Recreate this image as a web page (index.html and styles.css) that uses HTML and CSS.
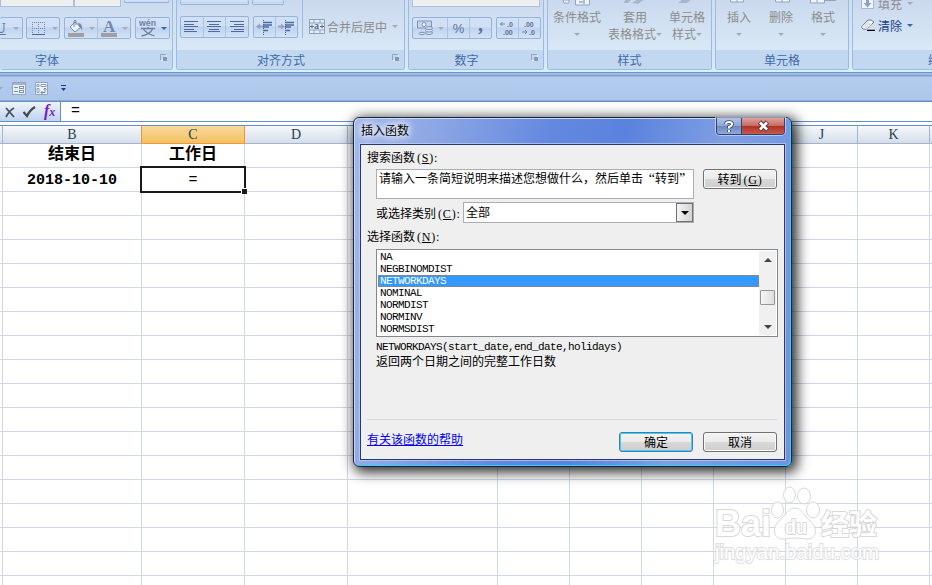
FILE: index.html
```
<!DOCTYPE html>
<html lang="zh-CN">
<head>
    <meta charset="utf-8">
    <title>插入函数</title>
    <link rel="stylesheet" href="styles.css">
</head>
<body>
    <div class="ribbon">
        <div class="group font-group">
            <div class="top-row">
                <span class="combo font-name"></span>
                <span class="combo font-size"></span>
                <span class="btns grow"></span>
            </div>
            <div class="btn-row">
                <div class="btns underline"><b>U</b><i class="arrow"></i></div>
                <div class="btns border-btn">
                    <svg width="15" height="15" shape-rendering="crispEdges"><path d="M1 1h13M1 7.5h13M1.5 1v12M7.5 1v12M13.5 1v12" stroke="#7088b5" stroke-dasharray="1 1" fill="none"/><path d="M1 13.5h13" stroke="#4a689e"/></svg>
                    <i class="arrow"></i>
                </div>
                <div class="btns color-btns">
                    <span>
                        <svg width="18" height="18"><path d="M3 8l5-5 6 5-6 5z" fill="#eef4fc" stroke="#7388ae"/><path d="M7 8V2q1-2 2 0v4" fill="none" stroke="#7388ae"/><path d="M11 4q5 0 4 8-1-4-3-4z" fill="#7388ae"/><path d="M1 14h16v4H1z" fill="#a0a0a4"/></svg>
                        <i class="arrow"></i>
                    </span>
                    <span>
                        <svg width="18" height="18"><text x="3" y="13" class="letter-a">A</text><path d="M1 14h16v4H1z" fill="#a0a0a4"/></svg>
                        <i class="arrow"></i>
                    </span>
                </div>
                <div class="btns phonetic">
                    <svg width="18" height="18"><text x="0" y="7" class="wen" textLength="17" lengthAdjust="spacingAndGlyphs">wén</text><path d="M2 9.500h14M9 8v2M4.500 10q2 4 11 7M13.500 10q-2 5-11 7" fill="none" stroke="#6e81a5" stroke-width="1.300"/></svg>
                    <i class="arrow on"></i>
                </div>
            </div>
            <div class="group-name">字体<i class="launcher"></i></div>
        </div>

        <div class="group align-group">
            <div class="top-row">
                <span class="btns valign"></span>
                <span class="btns orient"></span>
            </div>
            <div class="btn-row">
                <div class="btns halign">
                    <span><svg width="15" height="12" shape-rendering="crispEdges"><path d="M0 .5h14M0 3.500h10M0 5.500h14M0 8.500h10M0 10.500h13" stroke="#4d6a9a"/></svg></span>
                    <span><svg width="15" height="12" shape-rendering="crispEdges"><path d="M0 .5h14M2 3.500h10M0 5.500h14M2 8.500h10M1 10.500h12" stroke="#4d6a9a"/></svg></span>
                    <span><svg width="15" height="12" shape-rendering="crispEdges"><path d="M0 .5h14M4 3.500h10M0 5.500h14M4 8.500h10M1 10.500h13" stroke="#4d6a9a"/></svg></span>
                </div>
                <div class="btns indent">
                    <span><svg width="17" height="15"><path d="M0 6.500l4-3v2h3v2h-3v2z" fill="#91a5c7"/><path d="M7 2.500h9M7 5h9M7 7h6M7 10.500h5" stroke="#4d6a9a" stroke-width="1.500"/><path d="M7.500 0v15" stroke="#4d6a9a" stroke-dasharray="1 1"/></svg></span>
                    <span><svg width="17" height="15"><path d="M7 6.500l-4-3v2h-3v2h3v2z" fill="#91a5c7"/><path d="M7 2.500h9M7 5h9M7 7h6M7 10.500h5" stroke="#4d6a9a" stroke-width="1.500"/><path d="M7.500 0v15" stroke="#4d6a9a" stroke-dasharray="1 1"/></svg></span>
                </div>
                <div class="merge">
                    <svg width="16" height="15"><path d="M.5.5h15v14H.5zM.5 4h15M.5 11h15M5 .5V4M11 .5V4M5 11v3.500M11 11v3.500" fill="#e9f0fa" stroke="#8b9fc0"/><path d="M1 7.500h4M11 7.500h4M3 5.500v4M13 5.500v4" stroke="#526c99"/><text x="5" y="10" class="small-a">a</text></svg>
                    合并后居中<i class="arrow"></i>
                </div>
            </div>
            <div class="group-name">对齐方式<i class="launcher"></i></div>
        </div>

        <div class="group number-group">
            <div class="top-row"><span class="combo format"></span></div>
            <div class="btn-row">
                <div class="btns number-btns">
                    <span class="money">
                        <svg width="17" height="16"><path d="M.5 1h14v7H.5z" fill="#c8d6eb" stroke="#7c91b6"/><circle cx="7" cy="4.500" r="2" fill="#f3f7fd" stroke="#7c91b6"/><g fill="#d7e2f2" stroke="#7c91b6"><ellipse cx="12" cy="13" rx="3.500" ry="1.500"/><ellipse cx="12" cy="10.500" rx="3.500" ry="1.500"/><ellipse cx="12" cy="8" rx="3.500" ry="1.500"/><ellipse cx="5" cy="13.500" rx="3" ry="1.200"/></g></svg>
                        <i class="arrow"></i>
                    </span>
                    <span>%</span>
                    <span class="comma">,</span>
                </div>
                <div class="btns decimals">
                    <span><svg width="18" height="16"><path d="M1 4h5M3.500 2l-2 2 2 2" fill="none" stroke="#6f88b2"/><text x="8" y="7">.0</text><text x="4" y="15">.00</text></svg></span>
                    <span><svg width="18" height="16"><text x="3" y="7">.00</text><path d="M1 12h5M4 10l2 2-2 2" fill="none" stroke="#6f88b2"/><text x="8" y="15">.0</text></svg></span>
                </div>
            </div>
            <div class="group-name">数字<i class="launcher"></i></div>
        </div>

        <div class="group style-group">
            <div class="big-btns">
                <div class="big cond">
                    <svg width="34" height="6"><path d="M3 0h6v3H4zM15.500-1h14v6h-14z" fill="#eef4fb" stroke="#91a3bf"/><path d="M19 2h4M24 0v4" stroke="#7188ad"/></svg>
                    <p>条件格式</p><p><i class="arrow"></i></p>
                </div>
                <div class="big fmt">
                    <svg width="34" height="6"><path d="M7 0h6l-3 3H6zM14 3l6-4h7l-7 5z" fill="#a7b6ce"/></svg>
                    <p>套用</p><p>表格格式<i class="arrow"></i></p>
                </div>
                <div class="big cell-style">
                    <svg width="34" height="6"><path d="M8 3l5-4h9l-5 4z" fill="#a7b6ce"/></svg>
                    <p>单元格</p><p>样式<i class="arrow"></i></p>
                </div>
            </div>
            <div class="group-name">样式</div>
        </div>

        <div class="group cell-group">
            <div class="big-btns">
                <div class="big">
                    <svg width="34" height="6"><path d="M8.500-2h13v4h-13zM15-2v4" fill="#eef4fb" stroke="#91a3bf"/></svg>
                    <p>插入</p><p><i class="arrow"></i></p>
                </div>
                <div class="big">
                    <svg width="34" height="6"><path d="M11.500-2h14v4h-14zM18-2v4" fill="#eef4fb" stroke="#91a3bf"/></svg>
                    <p>删除</p><p><i class="arrow"></i></p>
                </div>
                <div class="big">
                    <svg width="34" height="6"><path d="M4.500-2h14v5h-14zM11-2v5" fill="#eef4fb" stroke="#91a3bf"/><path d="M18 0h12" stroke="#91a3bf" stroke-width="2"/></svg>
                    <p>格式</p><p><i class="arrow"></i></p>
                </div>
            </div>
            <div class="group-name">单元格</div>
        </div>

        <div class="group edit-group">
            <div class="edit-row fill">
                <svg width="14" height="14"><path d="M.5.5h12v12H.5z" fill="#eef4fc" stroke="#a6b7d0"/><path d="M5 2h3v5h2.500l-4 4.500L2.500 7H5z" fill="#8ca1c4"/></svg>
                填充<i class="arrow"></i>
            </div>
            <div class="edit-row clear">
                <svg width="14" height="12"><path d="M1 7l6-6q3-1 6 2L7 9q-2 2-5 1-2-1-1-3z" fill="#fff" stroke="#66758f"/><path d="M1 7l6-5 4 3-5 5z" fill="#dfe6f2"/><path d="M6 11.500h8" stroke="#000" stroke-width="1.500"/></svg>
                清除<i class="arrow on"></i>
            </div>
            <div class="group-name">编辑</div>
        </div>
    </div>

    <div class="quick-bar">
        <i class="arrow"></i>
        <svg class="form-icon" width="14" height="13" shape-rendering="crispEdges"><path d="M.5.500h13v12H.5z" fill="#e8eff9" stroke="#93a5c1"/><path d="M1 2h12" stroke="#a5b3c9" stroke-width="2"/><path d="M2 5.500h4M2 9.500h4" stroke="#7f92b0"/><path d="M7.500 4.500h4v2h-4zM7.500 8.500h4v2h-4z" fill="#fff" stroke="#7f92b0"/></svg>
        <svg width="14" height="13"><path d="M.5.500h12v12H.5z" fill="#eef3fa" stroke="#93a5c1"/><path d="M2 2.500h2v2H2zM6 2.500h5v2H6zM2 6.500h2v4H2z" fill="#fff" stroke="#8d9dba"/><path d="M6 10.500h4V6M7.500 9L6 10.500 7.500 12M8.500 7.500L10 6l1.500 1.500" fill="none" stroke="#7488a8"/></svg>
        <svg class="more" width="6" height="7"><path d="M0 .5h5" stroke="#173f85"/><path d="M0 3h5L2.500 6z" fill="#173f85"/></svg>
    </div>

    <div class="formula-bar">
        <div class="fx-box">
            <svg width="10" height="12"><path d="M1 2l8 9M9 2q-5 3-8 9" stroke="#4c4f55" stroke-width="1.800" fill="none"/></svg>
            <svg class="tick" width="14" height="12"><path d="M1.500 6l3.500 4q3-6 8-9" stroke="#45474d" stroke-width="2.200" fill="none"/></svg>
            <span class="fx">f<small>x</small></span>
        </div>
        <div class="formula">=</div>
    </div>

    <table class="sheet">
        <thead>
            <tr><th class="edge"></th><th class="b">B</th><th class="c active">C</th><th class="d">D</th><th class="e">E</th><th>F</th><th>G</th><th>H</th><th>I</th><th>J</th><th>K</th><th class="last"></th></tr>
        </thead>
        <tbody id="rows">
            <tr><td></td><td>结束日</td><td>工作日</td><td></td><td></td><td></td><td></td><td></td><td></td><td></td><td></td><td></td></tr>
            <tr><td></td><td class="date">2018-10-10</td><td class="selected"><div class="cursor">=</div></td><td></td><td></td><td></td><td></td><td></td><td></td><td></td><td></td><td></td></tr>
        </tbody>
    </table>

    <div class="dialog">
        <div class="title-bar">
            <span class="title">插入函数</span>
            <div class="caption-btns">
                <span class="help"><svg width="12" height="13"><path d="M3 4q0-2 3-2t3 2q0 2-3 3v1.500M6 10v2" fill="none" stroke="#38435f" stroke-width="3.600"/><path d="M3 4q0-2 3-2t3 2q0 2-3 3v1.500M6 10v2" fill="none" stroke="#fff" stroke-width="2"/></svg></span>
                <span class="close"><svg width="13" height="12"><path d="M2.500 2l8 8M10.500 2l-8 8" stroke="#5b3b45" stroke-width="4.600"/><path d="M3 2.500l7 7M10 2.500l-7 7" stroke="#fff" stroke-width="2.600"/></svg></span>
            </div>
        </div>
        <div class="client">
            <div class="label">搜索函数<span class="key">(<u>S</u>):</span></div>
            <div class="search-row">
                <div class="search">请输入一条简短说明来描述您想做什么，然后单击<span class="quote open">“</span>转到<span class="quote">”</span></div>
                <div class="button go">转到<span class="key">(<u>G</u>)</span></div>
            </div>
            <div class="category">
                <span>或选择类别<span class="key">(<u>C</u>):</span></span>
                <div class="select">全部<span class="drop"><i class="arrow"></i></span></div>
            </div>
            <div class="label select-label">选择函数<span class="key">(<u>N</u>):</span></div>
            <div class="list">
                <ul>
                    <li>NA</li>
                    <li>NEGBINOMDIST</li>
                    <li class="current">NETWORKDAYS</li>
                    <li>NOMINAL</li>
                    <li>NORMDIST</li>
                    <li>NORMINV</li>
                    <li>NORMSDIST</li>
                </ul>
                <div class="scroll">
                    <i class="up"></i>
                    <span class="thumb"></span>
                    <i class="down"></i>
                </div>
            </div>
            <div class="syntax">NETWORKDAYS(start_date,end_date,holidays)</div>
            <div class="desc">返回两个日期之间的完整工作日数</div>
            <div class="footer">
                <a href="#">有关该函数的帮助</a>
                <div class="button ok">确定</div>
                <div class="button">取消</div>
            </div>
        </div>
    </div>

    <svg class="watermark" width="180" height="85">
        <g>
            <ellipse cx="64.500" cy="26" rx="6" ry="8"/>
            <ellipse cx="76.500" cy="11" rx="6" ry="8"/>
            <ellipse cx="91" cy="12" rx="6.500" ry="8"/>
            <ellipse cx="100" cy="26" rx="6.500" ry="8"/>
            <path d="M82 24c7 0 9 8 15 13 9 8 6 18-3 18-5 0-7-1-12-1s-7 1-12 1c-9 0-12-10-4-18 6-5 9-13 16-13z"/>
        </g>
        <text class="bai" x="2" y="52" textLength="56" lengthAdjust="spacingAndGlyphs">Bai</text>
        <text class="du" x="72" y="50" textLength="22" lengthAdjust="spacingAndGlyphs">du</text>
        <text class="jingyan" x="108" y="51">经验</text>
        <text class="url" x="2" y="75" textLength="164" lengthAdjust="spacingAndGlyphs">jingyan.baidu.com</text>
    </svg>

    <script>
        // empty rows below the data
        var rows = document.getElementById('rows');
        for (var i = 0; i < 17; i++) {
            var row = rows.insertRow();
            for (var j = 0; j < 12; j++) {
                row.insertCell();
            }
        }
    </script>
</body>
</html>
```
FILE: styles.css
```
* {
    box-sizing: border-box;
}
body {
    margin: 0;
    width: 932px;
    height: 585px;
    overflow: hidden;
    position: relative;
    background: #fff;
    font-family: "Liberation Sans", "Noto Sans CJK SC", sans-serif;
    font-size: 12px;
}
svg {
    display: block;
    flex: none;
}
.arrow {
    display: inline-block;
    flex: none;
    border: 3px solid transparent;
    border-top: 3px solid #a5aab5;
    border-bottom: 0;
}
.arrow.on {
    border-top-color: #3466a8;
}

/* ribbon */
.ribbon {
    display: flex;
    gap: 3px;
    height: 72px;
    overflow: hidden;
    background: linear-gradient(#cfdff3 0, #d8e8f6 65px, #d5f3fb 72px);
}
.group {
    display: flex;
    flex-direction: column;
    flex: none;
    height: 70px;
    border: 1px solid #9bbce0;
    border-top: 0;
    border-radius: 0 0 3px 3px;
    background: linear-gradient(#cad9ee, #d9e8f5 50px);
    color: #8d8d8d;
    overflow: hidden;
}
.group-name {
    margin-top: auto;
    height: 19px;
    flex: none;
    display: flex;
    justify-content: center;
    align-items: center;
    background: #c1d8f0;
    color: #3e6aaa;
    position: relative;
}
.launcher {
    position: absolute;
    right: 5px;
    top: 4px;
    width: 7px;
    height: 7px;
    border: 1px solid #94a9c4;
    border-right-color: #eff6ff;
    border-bottom-color: #eff6ff;
}
.launcher:after {
    content: "";
    position: absolute;
    left: 2px;
    top: 2px;
    width: 4px;
    height: 4px;
    background: #8499b6;
}
.font-group { width: 173px; border-left: 0; }
.font-group .group-name { padding-right: 78px; }
.align-group { width: 229px; }
.align-group .group-name { padding-right: 19px; }
.number-group { width: 136px; }
.number-group .group-name { padding-right: 19px; }
.style-group { width: 165px; }
.cell-group { width: 134px; }
.edit-group { width: 159px; }
.edit-group .group-name { padding-left: 17px; }
.top-row {
    display: flex;
    height: 17px;
    flex: none;
    align-items: flex-start;
}
.combo {
    height: 7px;
    background: #efefef;
    border: 1px solid #a9c1de;
    border-top: 0;
}
.font-name { width: 74px; }
.font-size { width: 47px; }
.format { width: 128px; margin-left: 3px; }
.btns {
    display: flex;
    align-items: center;
    height: 22px;
    border: 1px solid #95b3dc;
    border-radius: 2px;
    background: linear-gradient(#d2e1f5 0, #cfdff4 45%, #bfd3ef 50%, #d3e2f5);
}
.btns > span {
    display: flex;
    align-items: center;
    justify-content: center;
    height: 20px;
    flex: 1;
}
.btns > span + span {
    border-left: 1px solid #aac3e5;
}
.top-row .btns {
    border-top: 0;
}
.font-group .grow { width: 45px; height: 3px; margin-left: 3px; }
.top-row .valign { width: 69px; height: 5px; margin-left: 3px; }
.top-row .orient { width: 32px; height: 5px; margin-left: 3px; }
.align-group .top-row { height: 16px; }
.btn-row {
    display: flex;
    gap: 4px;
}
.underline {
    width: 23px;
    border-left: 0;
    color: #6078a3;
    gap: 7px;
}
.underline b {
    margin-left: -5px;
    width: 11px;
    font: bold 15px "Liberation Serif", serif;
    text-decoration: underline;
}
.border-btn {
    width: 34px;
    margin-left: -1px;
    padding-left: 4px;
    gap: 6px;
}
.color-btns {
    width: 67px;
}
.color-btns > span {
    gap: 4px;
}
.phonetic {
    width: 35px;
    padding-left: 3px;
    gap: 4px;
}
.letter-a {
    font: bold 17px "Liberation Serif", serif;
    fill: #7388ae;
}
.wen {
    font: bold 9px "Liberation Sans", sans-serif;
    fill: #6e81a5;
}
.small-a {
    font: bold 10px "Liberation Serif", serif;
    fill: #526c99;
}
.halign { width: 69px; margin-left: 3px; }
.indent { width: 45px; }
.merge {
    display: flex;
    align-items: center;
    height: 38px;
    margin-top: -16px;
    padding: 14px 0 0 6px;
    border-left: 1px solid #9db9dd;
    white-space: nowrap;
}
.merge svg { margin-right: 2px; }
.merge .arrow { margin-left: 5px; }
.number-btns {
    width: 80px;
    margin-left: 3px;
    color: #5b7199;
    font-size: 13px;
}
.number-btns .money {
    flex: 0 0 34px;
    gap: 4px;
}
.number-btns .comma {
    font: bold 20px/10px "Liberation Serif", serif;
    padding-bottom: 9px;
}
.decimals {
    width: 45px;
}
.decimals text {
    font: bold 7px "Liberation Sans", sans-serif;
    fill: #5b7199;
}
.big-btns {
    display: flex;
}
.big {
    width: 42px;
    text-align: center;
    white-space: nowrap;
}
.big svg {
    margin: 0 auto 3px;
}
.big p {
    margin: 0;
    height: 17px;
    line-height: 18px;
}
.big p .arrow {
    margin-left: 4px;
    margin-right: -3px;
    vertical-align: 3px;
}
.big p .arrow:first-child {
    margin: 0;
}
.big p:last-child:has(> .arrow:only-child) {
    margin: 0;
}
.style-group .cond { width: 58px; }
.style-group .fmt { width: 58px; }
.style-group .cell-style { width: 46px; }
.style-group .fmt .arrow,
.style-group .cell-style .arrow {
    margin-left: 3px;
    margin-right: -6px;
}
.cell-group .big-btns { padding-left: 2px; }
.cell-group .big p { line-height: 19px; }
.edit-row {
    display: flex;
    align-items: center;
    height: 22px;
    padding-left: 8px;
}
.edit-row svg { margin-right: 3px; }
.edit-row .arrow { margin-left: 5px; }
.fill { margin-top: -8px; }
.clear { color: #15428b; }

/* quick access toolbar */
.quick-bar {
    display: flex;
    align-items: center;
    height: 29px;
    padding-top: 3px;
    border-top: 1px solid #6f94c3;
    border-bottom: 1px solid #8fabd5;
    background: linear-gradient(#9dbbe5 0, #9dbbe5 2px, #7f9fcf 2px, #7f9fcf 3px, #b3ccee 4px, #adc7eb);
}
.quick-bar .arrow { margin-left: -3px; }
.quick-bar .form-icon { margin: 0 9px; }
.quick-bar .more { margin-left: 12px; }

/* formula bar */
.formula-bar {
    display: flex;
    height: 21px;
    border-top: 1px solid #6490be;
    border-bottom: 1px solid #6490be;
    background: #fff;
}
.fx-box {
    display: flex;
    align-items: center;
    width: 61px;
    padding-left: 5px;
    background: linear-gradient(#edf4fd, #bed3ee);
    border-right: 1px solid #6490be;
}
.tick { margin-left: 7px; }
.fx {
    margin-left: 8px;
    font: italic bold 16px/17px "Liberation Serif", serif;
    color: #7418c8;
}
.fx small {
    font-size: 12px;
}
.formula {
    padding-left: 10px;
    font: 15px/20px "Liberation Mono", monospace;
}

/* sheet */
.sheet {
    width: 932px;
    table-layout: fixed;
    border-collapse: separate;
    border-spacing: 0;
    margin-top: 3px;
    font-family: "Liberation Mono", "Noto Sans CJK SC", monospace;
}
.sheet th, .sheet td {
    padding: 0;
    text-align: center;
    white-space: nowrap;
}
.sheet th {
    width: 72px;
    height: 19px;
    border-top: 1px solid #6490be;
    border-right: 1px solid #9eb6ce;
    border-bottom: 1px solid #9eb6ce;
    background: linear-gradient(#f5f9fd, #d5dde9);
    font: 14px/17px "Liberation Serif", serif;
    color: #263f50;
}
.sheet th.edge { width: 3px; }
.sheet th.last { width: 2px; border-right: 0; }
.sheet th.b { width: 139px; }
.sheet th.c { width: 103px; }
.sheet th.d { width: 103px; }
.sheet th.e { width: 150px; }
.sheet th.active {
    background: linear-gradient(#f9d99f, #f1c15f);
    border-right-color: #ef963c;
    border-bottom-color: #ef963c;
    box-shadow: -1px 0 #ef963c;
}
.sheet td {
    height: 24px;
    border-right: 1px solid #d0d7e5;
    border-bottom: 1px solid #d0d7e5;
    font-size: 16px;
    font-weight: bold;
    line-height: 23px;
}
.sheet td:last-child {
    border-right: 0;
}
.sheet td.date {
    padding-top: 2px;
    font-size: 15px;
    line-height: 21px;
}
.selected {
    position: relative;
}
.cursor {
    position: absolute;
    left: -2px;
    top: -2px;
    width: 106px;
    height: 27px;
    border: 2px solid #1c1a16;
    font: 15px/26px "Liberation Mono", monospace;
}
.cursor:after {
    content: "";
    position: absolute;
    right: -3px;
    bottom: -3px;
    width: 5px;
    height: 5px;
    background: #1c1a16;
    border: 1px solid #fff;
    border-width: 1px 0 0 1px;
}

/* dialog */
.dialog {
    position: absolute;
    left: 353px;
    top: 117px;
    width: 439px;
    height: 350px;
    padding: 1px 6px 6px;
    border: 1px solid #16243f;
    border-radius: 6px;
    background: linear-gradient(100deg, #a4b9eb 0, #8aa5e4 18%, #6488e0 40%, #5a82de 55%, #7f9fe2 75%, #6e92df 100%);
    box-shadow: inset -1px -1px #35d0f5, inset 1px 1px #c8d8f8, 3px 3px 13px 2px rgba(0, 0, 0, 0.85);
}
.title-bar {
    display: flex;
    justify-content: space-between;
    height: 25px;
}
.title {
    padding-left: 1px;
    line-height: 24px;
    text-shadow: 0 0 6px #fff, 0 0 8px #fff, 0 0 10px #fff;
}
.caption-btns {
    display: flex;
    height: 17px;
    margin-top: -1px;
    border: 1px solid #33456f;
    border-top: 0;
    border-radius: 0 0 4px 4px;
    box-shadow: 0 0 0 1px rgba(215, 228, 255, 0.6);
    overflow: hidden;
}
.caption-btns span {
    display: flex;
    align-items: center;
    justify-content: center;
}
.help {
    width: 25px;
    border-right: 1px solid #33456f;
    background: linear-gradient(#b3c2e6 0, #8fa5d4 48%, #6a86c0 50%, #91a9db);
}
.close {
    width: 42px;
    background: linear-gradient(#dda29c 0, #c76c62 48%, #ad3125 50%, #c8594b);
}
.client {
    height: 316px;
    padding: 5px 6px 0;
    border: 1px solid #25396b;
    background: #efefef;
    box-shadow: 0 0 0 1px rgba(190, 211, 250, 0.7);
}
.label {
    height: 16px;
    line-height: 16px;
}
.key {
    font-family: "Liberation Serif", serif;
    font-size: 12px;
    letter-spacing: 0.8px;
    margin-left: 2px;
}
.search-row {
    display: flex;
    align-items: flex-start;
    justify-content: space-between;
    margin: 3px 1px 0 9px;
}
.search {
    width: 318px;
    height: 30px;
    padding: 1px 0 0 2px;
    background: #fff;
    border: 1px solid #abadb3;
    line-height: 17px;
    white-space: nowrap;
}
.quote {
    display: inline-block;
    width: 12px;
    font-family: "Liberation Serif", serif;
    font-size: 14px;
    line-height: 12px;
}
.quote.open {
    text-align: right;
}
.button {
    width: 74px;
    height: 20px;
    border: 1px solid #707070;
    border-radius: 3px;
    background: linear-gradient(#f3f3f3 0, #ebebeb 48%, #d8d8d8 52%, #cecece);
    box-shadow: inset 0 0 0 1px #fafafa;
    text-align: center;
    line-height: 21px;
}
.button.ok {
    border-color: #3c7fb1;
    box-shadow: inset 0 0 0 1px #43cdf4;
}
.category {
    display: flex;
    align-items: center;
    justify-content: space-between;
    margin: 3px 84px 0 9px;
}
.select {
    display: flex;
    justify-content: space-between;
    width: 231px;
    height: 21px;
    padding-left: 2px;
    background: #fff;
    border: 1px solid #abadb3;
    line-height: 20px;
}
.drop {
    display: flex;
    align-items: center;
    justify-content: center;
    width: 17px;
    height: 19px;
    border: 1px solid #707070;
    background: linear-gradient(90deg, #f4f4f4, #d4d4d4);
}
.drop .arrow {
    border: 4px solid transparent;
    border-top-color: #000;
    border-bottom: 0;
}
.select-label {
    margin-top: 6px;
    line-height: 17px;
}
.list {
    display: flex;
    width: 402px;
    height: 88px;
    margin: 4px 0 0 9px;
    padding: 1px;
    background: #fff;
    border: 1px solid #828790;
}
.list ul {
    flex: 1;
    margin: 0;
    padding: 0;
    list-style: none;
}
.list li {
    height: 12px;
    padding-left: 2px;
    line-height: 13px;
}
.list li, .syntax {
    font-family: "Liberation Mono", monospace;
    font-size: 11px;
    letter-spacing: -0.6px;
}
.list li.current {
    background: #3399ff;
    outline: 1px dotted #c47a35;
    outline-offset: -1px;
    color: #fff;
}
.scroll {
    display: flex;
    flex-direction: column;
    align-items: center;
    width: 17px;
    background: #f0f0f0;
}
.up, .down {
    border: 4px solid transparent;
}
.up {
    margin-top: 7px;
    border-top: 0;
    border-bottom: 4px solid #444;
}
.down {
    margin-top: 20px;
    border-bottom: 0;
    border-top: 4px solid #444;
}
.thumb {
    width: 15px;
    height: 15px;
    margin-top: 28px;
    border: 1px solid #979797;
    border-radius: 1px;
    background: linear-gradient(90deg, #f6f6f6, #ddd);
}
.syntax {
    margin: 3px 0 0 9px;
    line-height: 14px;
}
.desc {
    margin-left: 9px;
    line-height: 16px;
}
.footer {
    display: flex;
    gap: 10px;
    margin: 49px 1px 0 0;
    padding-top: 12px;
    border-top: 1px solid #d4dbe4;
}
.footer a {
    margin-right: auto;
    line-height: 17px;
    color: #0000ee;
}

/* watermark */
.watermark {
    position: absolute;
    left: 713px;
    top: 484px;
    fill: #fff;
    stroke: #d2d2d2;
    stroke-width: 1px;
    opacity: 0.85;
}
.watermark text {
    font-family: "Liberation Sans", "Noto Sans CJK SC", sans-serif;
    paint-order: stroke;
    stroke-width: 2px;
}
.watermark .bai {
    font-size: 36px;
    font-weight: bold;
}
.watermark .du {
    font-size: 20px;
    font-weight: bold;
}
.watermark .jingyan {
    font-size: 28px;
    font-weight: bold;
}
.watermark .url {
    font-size: 20px;
    stroke: #dcdcdc;
}
```
